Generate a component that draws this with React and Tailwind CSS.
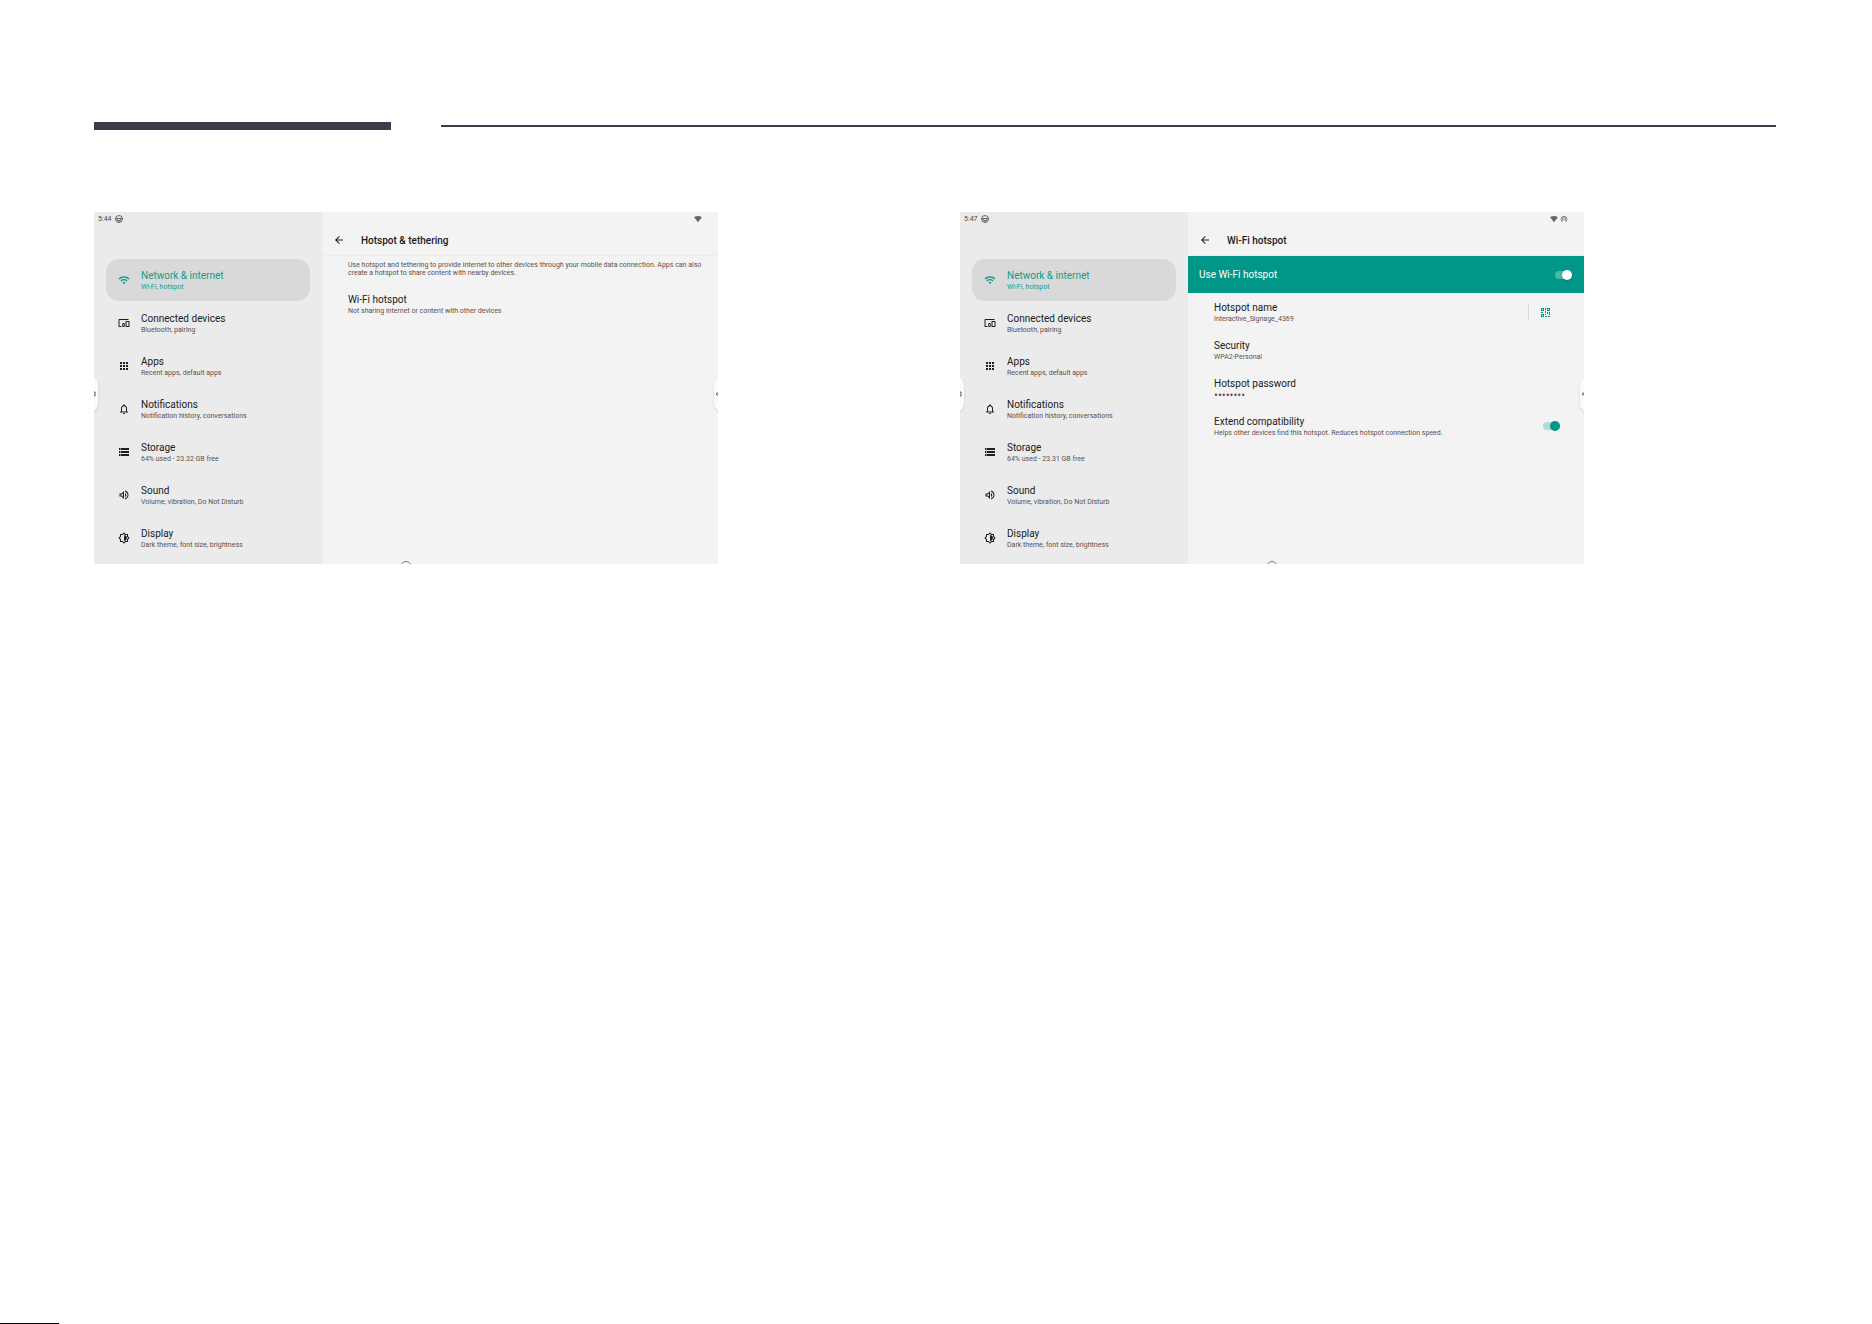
import React from 'react';
import {
    MdWifi,
    MdDevicesOther,
    MdApps,
    MdNotificationsNone,
    MdStorage,
    MdOutlineVolumeUp,
    MdOutlineBrightnessMedium,
    MdArrowBack,
    MdWifiTethering,
    MdSignalWifi4Bar
} from 'react-icons/md';

const menuItems = (freeSpace) => [
    { icon: MdWifi, title: 'Network & internet', summary: 'Wi-Fi, hotspot', active: true },
    { icon: MdDevicesOther, title: 'Connected devices', summary: 'Bluetooth, pairing' },
    { icon: MdApps, title: 'Apps', summary: 'Recent apps, default apps' },
    { icon: MdNotificationsNone, title: 'Notifications', summary: 'Notification history, conversations' },
    { icon: MdStorage, title: 'Storage', summary: `64% used - ${freeSpace} GB free` },
    { icon: MdOutlineVolumeUp, title: 'Sound', summary: 'Volume, vibration, Do Not Disturb' },
    { icon: MdOutlineBrightnessMedium, title: 'Display', summary: 'Dark theme, font size, brightness' }
];

function StatusGlyph() {
    return (
        <svg viewBox="0 0 16 16" className="w-2 h-2" fill="none" stroke="currentColor" strokeWidth="1.6">
            <circle cx="8" cy="8" r="7" />
            <path d="M1.5 7h13M4.5 7v4h7V7M8 11v4" />
        </svg>
    );
}

function QrGlyph() {
    return (
        <svg viewBox="0 0 9 9" className="w-[9px] h-[9px]" fill="currentColor" shapeRendering="crispEdges">
            <path fillRule="evenodd" d="M0 0h3v3H0zM1 1v1h1V1zM6 0h3v3H6zM7 1v1h1V1zM0 6h3v3H0zM1 7v1h1V7z" />
            <path d="M4 0h1v2H4zM4 3h1v2H4zM0 4h2v1H0zM6 4h1v2H6zM8 4h1v3H8zM4 6h1v1H4zM4 8h2v1H4zM7 8h2v1H7z" />
        </svg>
    );
}

function MenuItem({ icon: Icon, title, summary, active }) {
    return (
        <button
            className={`flex items-center w-full h-[42px] pl-3 rounded-[13px] text-left ${active ? 'bg-[#d9d9d9] text-[#0f9d8c]' : 'text-[#202020]'}`}
        >
            <Icon size={12} className="mr-[11px] shrink-0" />
            <span className="min-w-0 pt-[2px]">
                <span className="block text-[10px] leading-3">{title}</span>
                <span className={`block text-[7px] leading-[10px] ${active ? '' : 'text-[#5c5050]'}`}>{summary}</span>
            </span>
        </button>
    );
}

function Row({ title, summary, secret, children }) {
    return (
        <div className="flex items-center justify-between h-[38px] pl-[26px] pr-6">
            <div className="pt-[2px]">
                <h3 className="text-[10px] leading-3 text-[#202020]">{title}</h3>
                <p className={`leading-[10px] text-[#5c5050] ${secret ? 'text-[12px] font-light' : 'text-[7px]'}`}>{summary}</p>
            </div>
            {children}
        </div>
    );
}

function Toggle({ id, light }) {
    return (
        <input
            id={id}
            type="checkbox"
            role="switch"
            defaultChecked
            className={`appearance-none relative w-[17px] h-2 rounded-full after:absolute after:-top-px after:right-0 after:w-[10px] after:h-[10px] after:rounded-full after:content-[''] ${light ? 'bg-[#4db6ac] after:bg-white after:shadow-sm' : 'bg-[#b0dad5] after:bg-[#009688]'}`}
        />
    );
}

function Handle({ side }) {
    return (
        <div
            className={`absolute top-[163px] flex items-center w-5 h-[38px] rounded-full bg-[#fbfbfb] text-[#555] shadow ${side === 'left' ? '-left-4 justify-end' : '-right-4'}`}
        >
            <svg viewBox="0 0 6 8" className={`w-[6px] h-2 ${side === 'left' ? 'mr-px' : 'ml-px'}`} fill="none" stroke="currentColor">
                <path d={side === 'left' ? 'M2 2h2v4H2' : 'M4 2L1 4L4 6'} />
            </svg>
        </div>
    );
}

function Device({ time, freeSpace, title, tethering, children }) {
    return (
        <section className="relative flex w-full max-w-[624px] overflow-hidden bg-[#f3f3f3]">
            <aside className="w-[228px] shrink-0 bg-[#ebebeb] pb-[5px]">
                <div className="flex items-center gap-[3px] h-[13px] mb-[34px] pl-1 text-[7px] leading-[13px] text-[#4a4a4a]">
                    <span className="pt-px">{time}</span>
                    <StatusGlyph />
                </div>
                <nav className="flex flex-col gap-px px-3">
                    {menuItems(freeSpace).map((item) => (
                        <MenuItem key={item.title} {...item} />
                    ))}
                </nav>
            </aside>

            <main className="flex-1 min-w-0">
                <div className="flex items-center justify-end gap-[2px] h-[13px] pr-4 text-[#666]">
                    <MdSignalWifi4Bar size={8} />
                    {tethering && <MdWifiTethering size={8} />}
                </div>
                <header className="flex items-center h-[30px] pl-[11px]">
                    <button aria-label="Back" className="mr-4 text-[#202020]">
                        <MdArrowBack size={12} />
                    </button>
                    <h2 className="pt-[2px] text-[10px] leading-3 font-medium text-[#202020]">{title}</h2>
                </header>
                <div className="border-t border-[#ececec]">{children}</div>
            </main>

            <Handle side="left" />
            <Handle side="right" />
            <div className="absolute -bottom-2 left-1/2 w-[11px] h-[11px] -translate-x-1/2 rounded-full border border-[#777] bg-white" />
        </section>
    );
}

export default function App() {
    return (
        <div className="flex flex-col min-h-screen bg-white font-['Roboto',sans-serif]">
            <div className="flex items-center gap-[50px] pt-[122px] pl-[94px] pr-24">
                <div className="w-[297px] h-2 bg-[#3e3b4b]"></div>
                <div className="flex-1 h-[2px] bg-[#3e3b4b]"></div>
            </div>

            <div className="grid grid-cols-2 gap-[50px] mt-[82px] pl-[94px] pr-24">
                <Device time="5:44" freeSpace="23.32" title="Hotspot & tethering">
                    <p className="pt-[5px] pb-2 pl-[26px] pr-4 text-[7px] leading-2 text-[#5c5050]">
                        Use hotspot and tethering to provide internet to other devices through your mobile data connection. Apps can also create a hotspot to share content with nearby devices.
                    </p>
                    <Row title="Wi-Fi hotspot" summary="Not sharing internet or content with other devices" />
                </Device>

                <Device time="5:47" freeSpace="23.31" title="Wi-Fi hotspot" tethering>
                    <div className="flex items-center justify-between h-[37px] pl-[11px] pr-3 bg-[#009688] text-white">
                        <label htmlFor="use-hotspot" className="text-[10px] leading-3">Use Wi-Fi hotspot</label>
                        <Toggle id="use-hotspot" light />
                    </div>
                    <Row title="Hotspot name" summary="Interactive_Signage_4369">
                        <button aria-label="Share hotspot" className="flex items-center h-4 pl-3 pr-[10px] border-l border-[#d8d8d8] text-[#009688]">
                            <QrGlyph />
                        </button>
                    </Row>
                    <Row title="Security" summary="WPA2-Personal" />
                    <Row title="Hotspot password" summary="••••••••" secret />
                    <Row
                        title={<label htmlFor="extend-compatibility">Extend compatibility</label>}
                        summary="Helps other devices find this hotspot. Reduces hotspot connection speed."
                    >
                        <Toggle id="extend-compatibility" />
                    </Row>
                </Device>
            </div>

            <div className="mt-auto w-[59px] h-px bg-black"></div>
        </div>
    );
}
